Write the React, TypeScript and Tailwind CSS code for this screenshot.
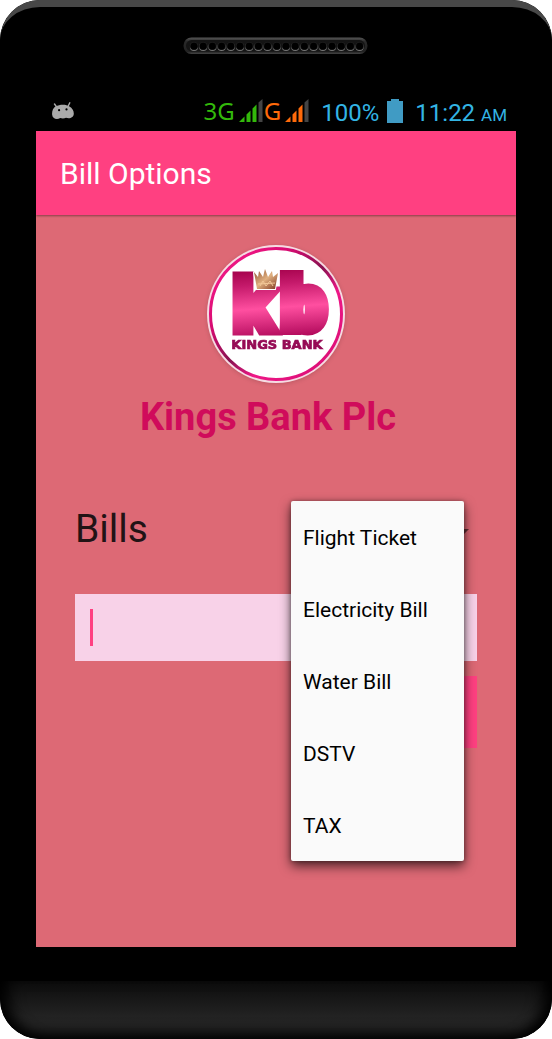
import { useState } from "react";

const bills = ["Flight Ticket", "Electricity Bill", "Water Bill", "DSTV", "TAX"];

function SpeakerGrille() {
  return (
    <svg width="186" height="18" viewBox="0 0 186 18" aria-hidden="true">
      <defs>
        <linearGradient id="grille" x2="0" y2="1">
          <stop offset="0" stopColor="#555" />
          <stop offset=".25" stopColor="#292929" />
          <stop offset=".85" stopColor="#222" />
          <stop offset="1" stopColor="#444" />
        </linearGradient>
      </defs>
      <rect x=".5" y=".5" width="184" height="16.5" rx="8" fill="url(#grille)" />
      <rect x="3" y="3" width="179" height="11.5" rx="5.7" fill="#141414" />
      {Array.from({ length: 19 }, (_, i) => (
        <g key={i}>
          <circle cx={11 + i * 9.2} cy="9.9" r="4.1" fill="#777" />
          <circle cx={11 + i * 9.2} cy="8.9" r="4.1" fill="#1b1b1b" />
          <circle cx={11 + i * 9.2} cy="9.2" r="3.4" fill="#000" />
        </g>
      ))}
    </svg>
  );
}

function DebugIcon() {
  return (
    <svg width="22" height="18" viewBox="0 0 22 18" aria-hidden="true">
      <path d="M2.5 2 5 5.5M17.8.8 16 4.5" stroke="#aaa" strokeWidth="1.4" strokeLinecap="round" />
      <path d="M3.5 4.5C8 2 14 2 17.5 4.5c2.6 1.4 4.4 4.2 4.3 7.2-.1 3.6-3.8 5.5-7.8 4.1-1.4.8-4.3.9-5.7.2C4.3 18.2.4 16.3.1 12.4-.1 9.3 1 5.9 3.5 4.5Z" fill="#aaa" />
      <circle cx="7.1" cy="8.2" r="1.1" fill="#000" />
      <circle cx="14.5" cy="7.4" r="1.1" fill="#000" />
    </svg>
  );
}

function SignalIcon({ color }: { color: string }) {
  return (
    <svg width="24" height="24" viewBox="0 0 24 24" aria-hidden="true">
      <path d="M0 23 5.5 17.5V23ZM7.5 15.5 11.5 11.5V23H7.5ZM13.5 9.5 17.5 5.5V23H13.5Z" fill={color} />
      <path d="M19.5 3.5 23.5 0V23H19.5Z" fill="#444" />
    </svg>
  );
}

function KingsLogo() {
  return (
    <svg width="144" height="144" viewBox="0 0 144 144" role="img" aria-label="Kings Bank" className="drop-shadow-sm">
      <defs>
        <linearGradient id="ring" x1="0" y1="0" x2="1" y2="1">
          <stop offset="0" stopColor="#871250" />
          <stop offset=".15" stopColor="#ed1683" />
          <stop offset=".3" stopColor="#d80b72" />
          <stop offset=".5" stopColor="#871250" />
          <stop offset=".65" stopColor="#ee1787" />
          <stop offset="1" stopColor="#d40c70" />
        </linearGradient>
        <linearGradient id="letters" gradientUnits="userSpaceOnUse" x1="74" y1="28" x2="79" y2="96">
          <stop offset="0" stopColor="#a90550" />
          <stop offset=".2" stopColor="#c51a6b" />
          <stop offset=".55" stopColor="#ff4fa0" />
          <stop offset="1" stopColor="#b0085a" />
        </linearGradient>
        <linearGradient id="crown" x2="1" y2="1">
          <stop offset="0" stopColor="#8c4c2d" />
          <stop offset=".5" stopColor="#e0b080" />
          <stop offset="1" stopColor="#7d351f" />
        </linearGradient>
      </defs>
      <circle cx="72" cy="72" r="69" fill="#f6dbe3" />
      <circle cx="72" cy="72" r="65.5" fill="#fff" stroke="url(#ring)" strokeWidth="3" />
      <g fontFamily="Liberation Sans, sans-serif" fontWeight="700" fill="url(#letters)" stroke="url(#letters)">
        <text x="29" y="88" fontSize="72" strokeWidth="11">k</text>
        <text x="78" y="86" fontSize="70" strokeWidth="14">b</text>
      </g>
      <path d="m50 30 4 5 1-6 4 6 2-8 3 8 4-6 1 6 5-4-3 16H53Z" fill="#fff" stroke="#fff" strokeWidth="2" />
      <path d="m50 30 4 5 1-6 4 6 2-8 3 8 4-6 1 6 5-4-3 16H53Z" fill="url(#crown)" />
      <path d="m54 42 17-1M56 44l3-5 3 5 4-5 3 5" fill="none" stroke="#f2c798" strokeWidth="1" />
      <text x="73" y="107" textAnchor="middle" fontFamily="DejaVu Sans, sans-serif" fontWeight="700" fontSize="13" fill="#960b55" stroke="#960b55" strokeWidth=".7">KINGS BANK</text>
    </svg>
  );
}

export default function App() {
  const [selected, setSelected] = useState(bills[0]);
  return (
    <div className="bg-white font-['Roboto',sans-serif]">
      <div className="flex min-h-screen flex-col overflow-hidden rounded-[40px] bg-black">
        <header className="h-[95px] rounded-t-[40px] bg-linear-to-b from-[#484848] from-10% to-black to-45%">
          <div className="flex h-full justify-center rounded-t-[40px] border-t-[7px] border-[#484848] bg-black pt-[30px]">
            <SpeakerGrille />
          </div>
        </header>

        <div className="mx-9 flex h-9 items-center justify-between pr-[9px] pb-1 pl-4 text-[#33b5e5]">
          <DebugIcon />
          <div className="flex items-center">
            <span className="font-['Noto_Sans',sans-serif] text-2xl text-[#33b90b]">3G</span>
            <span className="ml-1"><SignalIcon color="#33b90b" /></span>
            <span className="ml-px font-['Noto_Sans',sans-serif] text-2xl text-[#ff6a0a]">G</span>
            <span className="ml-1"><SignalIcon color="#ff6a0a" /></span>
            <span className="ml-3 pt-1 text-2xl">100%</span>
            <svg className="ml-2" width="16" height="24" viewBox="0 0 16 24" aria-hidden="true">
              <path d="M4 0H12V2H16V24H0V2H4Z" fill="#409bc4" />
            </svg>
            <span className="ml-3 pt-1 text-2xl">11:22 <small className="text-[17px] leading-6">AM</small></span>
          </div>
        </div>

        <div className="mx-9 flex flex-1 flex-col bg-[#dd6975]">
          <div className="z-10 flex h-[84px] items-center bg-[#ff4081] px-6 pt-px shadow-[0_1px_2px_#0006]">
            <h1 className="text-3xl text-white">Bill Options</h1>
          </div>

          <main className="flex flex-1 flex-col px-[39px] pt-[27px]">
            <div className="flex flex-col items-center">
              <KingsLogo />
              <p className="mt-2 mr-4 text-[38px] leading-[46px] font-bold text-[#d00b5b]">Kings Bank Plc</p>
            </div>

            <div className="mt-[53px] flex h-[72px] items-center justify-between">
              <label htmlFor="bill" className="text-[39px] leading-[46px] text-[#221315]">Bills</label>
              <div className="relative w-[198px]">
                <select
                  id="bill"
                  value={selected}
                  onChange={(e) => setSelected(e.target.value)}
                  className="block h-[72px] w-full appearance-none bg-transparent pr-9 pl-6 text-[21px] text-black"
                >
                  {bills.map((bill) => <option key={bill}>{bill}</option>)}
                </select>
                <svg className="pointer-events-none absolute top-9 right-2" width="16" height="8" viewBox="0 0 16 8" aria-hidden="true">
                  <path d="M0 0H16L8 8Z" fill="#652f35" />
                </svg>
                <div className="absolute top-2 right-[13px] z-20 w-[173px] rounded-xs bg-[#fafafa] shadow-[0_5px_12px_#000a,0_0_4px_#0005]">
                  {bills.map((bill) => (
                    <button
                      key={bill}
                      type="button"
                      onClick={() => setSelected(bill)}
                      className="flex h-[72px] w-full items-center px-3 pt-1 text-left text-[21px] text-black"
                    >
                      {bill}
                    </button>
                  ))}
                </div>
              </div>
            </div>

            <div className="relative mt-[29px]">
              <input type="text" aria-label="Bill details" className="block h-[67px] w-full bg-[#f8d2e8] px-4 text-[27px] caret-[#ff4081] outline-none" />
              <span className="pointer-events-none absolute top-[15px] left-[15px] h-[37px] w-[3px] bg-[#ff4081]" />
            </div>
            <button type="button" aria-label="Continue" className="mt-[15px] h-[72px] w-[180px] self-end bg-[#ff4081]" />
          </main>
        </div>

        <footer className="mt-[34px] h-[58px] rounded-b-[40px] bg-linear-to-b from-[#0d0d0d] via-[#222] via-60% to-[#292929] shadow-[inset_0_-14px_14px_-8px_#000,inset_16px_0_16px_-8px_#000,inset_-16px_0_16px_-8px_#000]" />
      </div>
    </div>
  );
}
